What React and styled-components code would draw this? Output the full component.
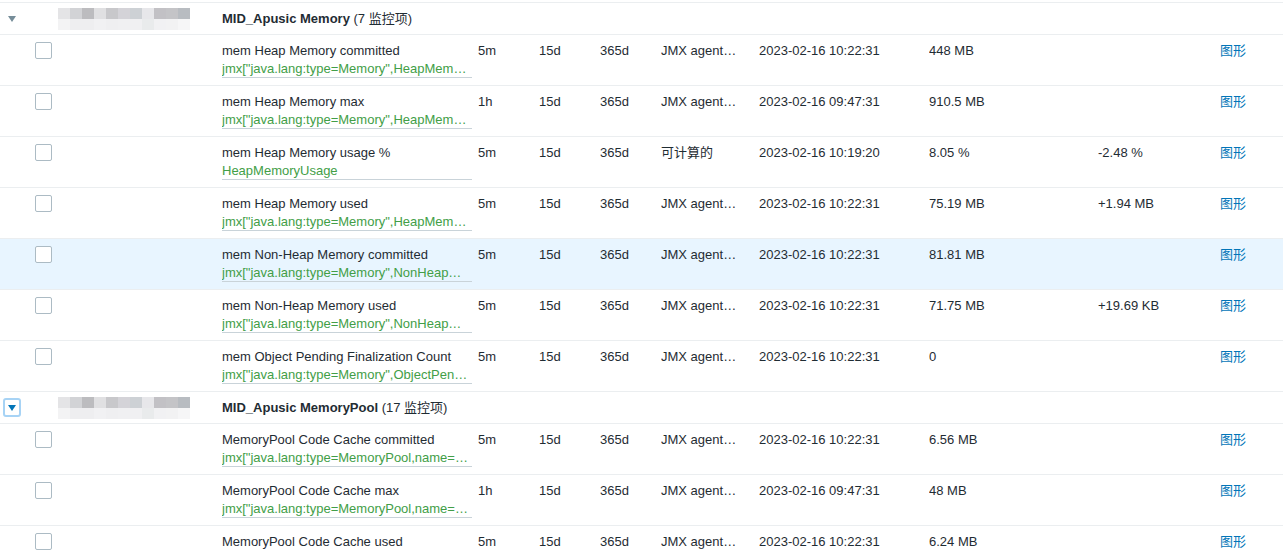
import React from 'react'
import styled, { createGlobalStyle } from 'styled-components'

const GlobalStyle = createGlobalStyle`
  html, body {
    margin: 0;
    padding: 0;
    background: #ffffff;
    overflow: hidden;
  }
  body {
    font-family: "Liberation Sans", Arial, "Noto Sans CJK SC", sans-serif;
    font-size: 13px;
    color: #1f2c33;
  }
`

const COLS = '35px 23px 164px 256px 61px 61px 61px 98px 170px 169px 122px 1fr'

export const Page = styled.div`
  padding-top: 2px;
  height: 552px;
  overflow: hidden;
`
export const Table = styled.div`
  border-top: 1px solid #ebeef0;
`
export const Row = styled.div`
  display: grid;
  grid-template-columns: ${COLS};
  height: 50px;
  border-bottom: 1px solid #ebeef0;
  background: ${p => (p.$hover ? '#e8f5ff' : '#ffffff')};
  line-height: 18px;
`
export const GroupRow = styled(Row)`
  height: 31px;
  align-items: center;
`
export const Cell = styled.div`
  padding-top: 7px;
  white-space: nowrap;
  overflow: hidden;
  min-width: 0;
`
export const CheckCell = styled.div`
  padding-top: 7px;
`
export const Check = styled.span`
  display: block;
  width: 15px;
  height: 15px;
  border: 1px solid #acbbc4;
  border-radius: 2px;
  background: #ffffff;
`
export const Toggle = styled.button`
  display: flex;
  align-items: center;
  justify-content: center;
  width: 18px;
  height: 19px;
  margin-left: 3px;
  padding: 0;
  border: 2px solid ${p => (p.$focus ? '#a7d3f5' : 'transparent')};
  border-radius: 3px;
  background: transparent;

  &::after {
    content: '';
    border-left: 4.5px solid transparent;
    border-right: 4.5px solid transparent;
    border-top: 6px solid ${p => (p.$focus ? '#0275b8' : '#768d99')};
  }
`
export const Blur = styled.div`
  display: flex;
  flex-direction: column;
  width: 132px;
  height: 22px;
`
export const BlurLine = styled.div`
  display: flex;
  flex: 1;
`
export const Pixel = styled.span`
  flex: 1;
  background: ${p => p.$c};
`
export const GroupName = styled.div`
  grid-column: 4 / -1;
  white-space: nowrap;
  b {
    font-weight: bold;
  }
`
export const ItemName = styled.div`
  white-space: nowrap;
`
export const ItemKey = styled.div`
  width: 250px;
  color: #429e47;
  white-space: nowrap;
  overflow: hidden;
  text-overflow: ellipsis;
  border-bottom: 1px solid #c9d3d9;
  line-height: 17px;
`
export const TypeText = styled.div`
  width: 80px;
  white-space: nowrap;
  overflow: hidden;
  text-overflow: ellipsis;
`
export const GraphLink = styled.a`
  color: #0275b8;
  text-decoration: none;
`

const blurTop = ['#e4e4e6', '#d2d3d6', '#bcbcbf', '#e0e0e2', '#c8c8cb', '#d4d3d8', '#cdd1d5', '#e7e7ea', '#c2c1c5', '#c4c4c7', '#b8bcc1']
const blurBottom = ['#f3f3f4', '#eeeef0', '#eeeef0', '#f1f1f3', '#efeff1', '#f0f0f2', '#f0f0f2', '#e9ebec', '#f1f1f3', '#f2f2f3', '#f6f6f7']

const HostBlur = () => (
  <Blur>
    <BlurLine>{blurTop.map((c, i) => <Pixel key={i} $c={c} />)}</BlurLine>
    <BlurLine>{blurBottom.map((c, i) => <Pixel key={i} $c={c} />)}</BlurLine>
  </Blur>
)

const JMX = 'JMX agent代理'

const groups = [
  {
    name: 'MID_Apusic Memory',
    count: '(7 监控项)',
    focus: false,
    items: [
      ['mem Heap Memory committed', 'jmx["java.lang:type=Memory",HeapMemoryUsage.committed]', '5m', JMX, '2023-02-16 10:22:31', '448 MB', ''],
      ['mem Heap Memory max', 'jmx["java.lang:type=Memory",HeapMemoryUsage.max]', '1h', JMX, '2023-02-16 09:47:31', '910.5 MB', ''],
      ['mem Heap Memory usage %', 'HeapMemoryUsage', '5m', '可计算的', '2023-02-16 10:19:20', '8.05 %', '-2.48 %'],
      ['mem Heap Memory used', 'jmx["java.lang:type=Memory",HeapMemoryUsage.used]', '5m', JMX, '2023-02-16 10:22:31', '75.19 MB', '+1.94 MB'],
      ['mem Non-Heap Memory committed', 'jmx["java.lang:type=Memory",NonHeapMemoryUsage.committed]', '5m', JMX, '2023-02-16 10:22:31', '81.81 MB', '', true],
      ['mem Non-Heap Memory used', 'jmx["java.lang:type=Memory",NonHeapMemoryUsage.used]', '5m', JMX, '2023-02-16 10:22:31', '71.75 MB', '+19.69 KB'],
      ['mem Object Pending Finalization Count', 'jmx["java.lang:type=Memory",ObjectPendingFinalizationCount]', '5m', JMX, '2023-02-16 10:22:31', '0', ''],
    ],
  },
  {
    name: 'MID_Apusic MemoryPool',
    count: '(17 监控项)',
    focus: true,
    items: [
      ['MemoryPool Code Cache committed', 'jmx["java.lang:type=MemoryPool,name=Code Cache",Usage.committed]', '5m', JMX, '2023-02-16 10:22:31', '6.56 MB', ''],
      ['MemoryPool Code Cache max', 'jmx["java.lang:type=MemoryPool,name=Code Cache",Usage.max]', '1h', JMX, '2023-02-16 09:47:31', '48 MB', ''],
      ['MemoryPool Code Cache used', 'jmx["java.lang:type=MemoryPool,name=Code Cache",Usage.used]', '5m', JMX, '2023-02-16 10:22:31', '6.24 MB', ''],
    ],
  },
]

const ItemRow = ({ item }) => {
  const [name, key, interval, type, clock, value, change, hover] = item
  return (
    <Row $hover={hover}>
      <Cell />
      <CheckCell><Check /></CheckCell>
      <Cell />
      <Cell>
        <ItemName>{name}</ItemName>
        <ItemKey>{key}</ItemKey>
      </Cell>
      <Cell>{interval}</Cell>
      <Cell>15d</Cell>
      <Cell>365d</Cell>
      <Cell><TypeText>{type}</TypeText></Cell>
      <Cell>{clock}</Cell>
      <Cell>{value}</Cell>
      <Cell>{change}</Cell>
      <Cell><GraphLink href="#">图形</GraphLink></Cell>
    </Row>
  )
}

const App = () => {
  return (
    <Page>
      <GlobalStyle />
      <Table>
        {groups.map(g => (
          <React.Fragment key={g.name}>
            <GroupRow>
              <div><Toggle $focus={g.focus} /></div>
              <div />
              <HostBlur />
              <GroupName><b>{g.name}</b> {g.count}</GroupName>
            </GroupRow>
            {g.items.map(it => <ItemRow key={it[0]} item={it} />)}
          </React.Fragment>
        ))}
      </Table>
    </Page>
  )
}

export default App
